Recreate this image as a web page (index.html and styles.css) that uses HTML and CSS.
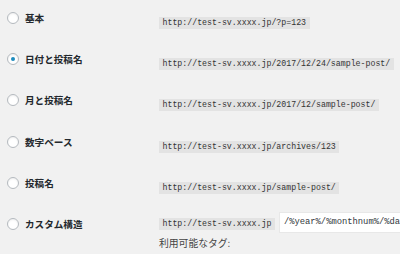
FILE: index.html
```html
<!DOCTYPE html>
<html lang="ja">
<head>
  <meta charset="UTF-8">
  <title>パーマリンク設定</title>
  <link rel="stylesheet" href="styles.css">
</head>
<body>

  <div class="permalinks">
    <div class="row">
      <label class="choice"><span class="radio"></span>基本</label>
      <div class="value"><code>http://test-sv.xxxx.jp/?p=123</code></div>
    </div>
    <div class="row">
      <label class="choice"><span class="radio checked"></span>日付と投稿名</label>
      <div class="value"><code>http://test-sv.xxxx.jp/2017/12/24/sample-post/</code></div>
    </div>
    <div class="row">
      <label class="choice"><span class="radio"></span>月と投稿名</label>
      <div class="value"><code>http://test-sv.xxxx.jp/2017/12/sample-post/</code></div>
    </div>
    <div class="row">
      <label class="choice"><span class="radio"></span>数字ベース</label>
      <div class="value"><code>http://test-sv.xxxx.jp/archives/123</code></div>
    </div>
    <div class="row">
      <label class="choice"><span class="radio"></span>投稿名</label>
      <div class="value"><code>http://test-sv.xxxx.jp/sample-post/</code></div>
    </div>
    <div class="row custom">
      <label class="choice"><span class="radio"></span>カスタム構造</label>
      <div class="value">
        <div class="line">
          <code>http://test-sv.xxxx.jp</code>
          <input type="text" class="structure" value="/%year%/%monthnum%/%day%/%postname%/">
        </div>
        <p class="tags">利用可能なタグ:</p>
      </div>
    </div>
  </div>

</body>
</html>
```

FILE: styles.css
```css
body {
  margin: 0;
  background: #f1f1f1;
  color: #23282d;
  font-family: "Noto Sans CJK JP", "Noto Sans", sans-serif;
  overflow: hidden;
}
.permalinks {
  margin-top: -3px;
}
.row {
  display: flex;
  align-items: center;
  height: 41.3px;
}
.choice {
  display: flex;
  align-items: center;
  width: 159px;
  flex-shrink: 0;
  font-size: 9.6px;
  font-weight: 700;
  color: #23282d;
}
.radio {
  width: 10px;
  height: 10px;
  margin: 0 6px 0 7px;
  border: 1px solid #b4b9be;
  border-radius: 50%;
  background: #fff;
  box-shadow: inset 0 1px 2px rgba(0, 0, 0, 0.07);
  display: flex;
  align-items: center;
  justify-content: center;
}
.radio.checked::before {
  content: "";
  width: 4px;
  height: 4px;
  border-radius: 50%;
  background: #1e8cbe;
}
.value {
  flex: 1;
  min-width: 0;
}
code {
  display: inline-block;
  background: #e3e3e3;
  color: #333;
  font-family: "Liberation Mono", monospace;
  font-size: 8.25px;
  line-height: 12px;
  padding: 0 3.5px;
  white-space: nowrap;
  flex-shrink: 0;
}
.custom {
  align-items: flex-start;
  height: auto;
}
.custom .choice {
  height: 41.3px;
}
.line {
  display: flex;
  align-items: center;
  height: 41.3px;
  overflow: hidden;
}
.structure {
  margin-left: 4px;
  width: 200px;
  height: 21px;
  box-sizing: border-box;
  border: 1px solid #e8e8e8;
  background: #fff;
  padding: 0 4px;
  font-family: "Liberation Mono", monospace;
  font-size: 8.8px;
  color: #32373c;
  flex-shrink: 0;
  margin-top: -4px;
}
.tags {
  margin: -9px 0 0;
  font-size: 9.8px;
  line-height: 14px;
  color: #444;
}
```
